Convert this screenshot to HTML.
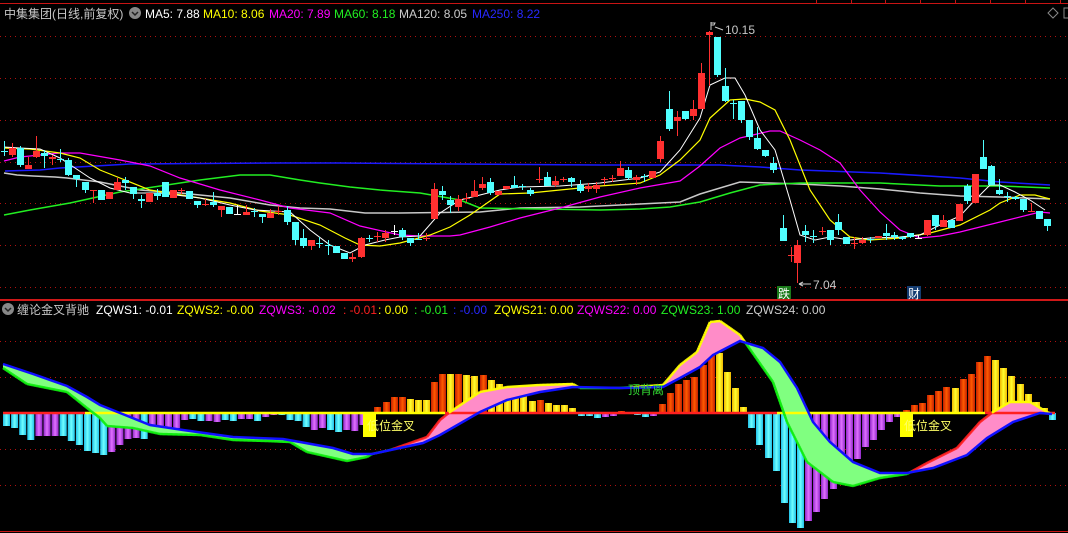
<!DOCTYPE html>
<html><head><meta charset="utf-8"><style>
html,body{margin:0;padding:0;background:#000;width:1068px;height:533px;overflow:hidden}
svg{display:block}
text{font-family:"Liberation Sans","Noto Sans CJK SC",sans-serif;font-size:12px}
</style></head><body>
<svg id="s" width="1068" height="533" viewBox="0 0 1068 533" xmlns="http://www.w3.org/2000/svg">
<defs>
<linearGradient id="gr" x1="0" x2="1"><stop offset="0" stop-color="#c42000"/><stop offset=".5" stop-color="#ff5a00"/><stop offset="1" stop-color="#c42000"/></linearGradient>
<linearGradient id="gy" x1="0" x2="1"><stop offset="0" stop-color="#f0b800"/><stop offset=".5" stop-color="#ffff30"/><stop offset="1" stop-color="#f0b800"/></linearGradient>
<linearGradient id="gc" x1="0" x2="1"><stop offset="0" stop-color="#20c0e8"/><stop offset=".5" stop-color="#70ffff"/><stop offset="1" stop-color="#20c0e8"/></linearGradient>
<linearGradient id="gp" x1="0" x2="1"><stop offset="0" stop-color="#9028c8"/><stop offset=".5" stop-color="#e070ff"/><stop offset="1" stop-color="#9028c8"/></linearGradient>
</defs>
<g id="grid" stroke="#b01010" stroke-width="1" stroke-dasharray="1,4"></g>
<line x1="0" y1="3.5" x2="1068" y2="3.5" stroke="#c81414"/>
<g stroke="#c81414"><line x1="816.5" y1="0" x2="816.5" y2="3"/><line x1="851.5" y1="0" x2="851.5" y2="3"/><line x1="885.5" y1="0" x2="885.5" y2="3"/><line x1="920.5" y1="0" x2="920.5" y2="3"/><line x1="955.5" y1="0" x2="955.5" y2="3"/><line x1="990.5" y1="0" x2="990.5" y2="3"/><line x1="1025.5" y1="0" x2="1025.5" y2="3"/><line x1="1060.5" y1="0" x2="1060.5" y2="3"/></g>
<line x1="0" y1="300" x2="1068" y2="300" stroke="#d01818" stroke-width="2"/>
<line x1="0" y1="531.5" x2="1068" y2="531.5" stroke="#c81414"/>
<g id="ma"></g>
<g id="cd"></g>
<g id="hist"></g>
<g id="fill"></g>
<g id="zl"></g>
<g id="ln"></g>
<text x="4" y="18" fill="#c8c8c8">中集集团(日线,前复权)</text>
<circle cx="135" cy="13" r="6" fill="#888"/><path d="M132 12l3 3 3-3" stroke="#222" stroke-width="1.5" fill="none"/>
<text x="145" y="18" fill="#fff">MA5: 7.88</text>
<text x="203" y="18" fill="#ffff00">MA10: 8.06</text>
<text x="269" y="18" fill="#ff00ff">MA20: 7.89</text>
<text x="334" y="18" fill="#22ee22">MA60: 8.18</text>
<text x="399" y="18" fill="#cccccc">MA120: 8.05</text>
<text x="472" y="18" fill="#2828ff">MA250: 8.22</text>
<path d="M1053 8l5 5-5 5-5-5z" stroke="#888" fill="none"/>
<rect x="1064" y="8" width="5" height="10" stroke="#888" fill="none"/>
<path d="M711 22v8M711 23h4l-1 2h-3" stroke="#ccc" fill="none"/><path d="M715 27l8 3" stroke="#ccc"/>
<text x="725" y="34" fill="#c8c8c8">10.15</text>
<path d="M799 284h12M799 284l4-2M799 284l4 2" stroke="#ccc" fill="none"/>
<text x="813" y="289" fill="#c8c8c8">7.04</text>
<rect x="777" y="286" width="14" height="13" fill="#1a7a1a"/><text x="778" y="298" fill="#fff" font-size="12">跌</text>
<rect x="907" y="286" width="14" height="13" fill="#143c70"/><text x="908" y="298" fill="#fff" font-size="12">财</text>
<circle cx="8" cy="309" r="6" fill="#888"/><path d="M5 308l3 3 3-3" stroke="#222" stroke-width="1.5" fill="none"/>
<text x="17" y="314" fill="#c8c8c8">缠论金叉背驰</text>
<text x="96" y="314" fill="#fff">ZQWS1: -0.01</text>
<text x="177" y="314" fill="#ffff00">ZQWS2: -0.00</text>
<text x="259" y="314" fill="#ff00ff">ZQWS3: -0.02</text>
<text x="343" y="314" fill="#ff2020">: -0.01</text>
<text x="378" y="314" fill="#ffff00">: 0.00</text>
<text x="414" y="314" fill="#22ee22">: -0.01</text>
<text x="453" y="314" fill="#2828ff">: -0.00</text>
<text x="494" y="314" fill="#ffff00">ZQWS21: 0.00</text>
<text x="577" y="314" fill="#ff00ff">ZQWS22: 0.00</text>
<text x="661" y="314" fill="#22ee22">ZQWS23: 1.00</text>
<text x="746" y="314" fill="#cccccc">ZQWS24: 0.00</text>
<g id="lbl"></g>
</svg>
<script>
var NS="http://www.w3.org/2000/svg";
function el(p,t,a){var e=document.createElementNS(NS,t);for(var k in a)e.setAttribute(k,a[k]);document.getElementById(p).appendChild(e);return e;}
[36,78,120,162,203,245,287,341,377,449,485].forEach(function(y){el("grid","line",{x1:0,x2:1068,y1:y+.5,y2:y+.5});});
function pl(p,pts,c,w){el(p,"polyline",{points:pts.map(function(q){return q.join(",")}).join(" "),fill:"none",stroke:c,"stroke-width":w||1});}
pl("ma",[[5,171],[40,170],[60,168],[130,164],[280,163],[340,163],[460,164],[600,165],[720,165],[760,167],[800,170],[880,173],[960,178],[1000,182],[1050,185]],"#1a1aff",1.5);
pl("ma",[[4,173],[17,175],[33,176],[55,177],[67,178],[100,182],[120,186],[140,190],[180,193],[230,198],[270,205],[300,208],[330,209],[365,213],[400,213],[480,212],[520,208],[580,207],[620,205],[680,202],[700,194],[740,182],[800,184],[840,186],[880,189],[920,193],[960,196],[1000,197],[1050,199]],"#c8c8c8",1.5);
pl("ma",[[4,215],[30,210],[70,203],[120,192],[200,180],[240,175],[270,175],[300,180],[320,183],[350,187],[380,190],[420,193],[460,200],[480,208],[540,209],[600,210],[640,209],[670,207],[700,202],[730,193],[760,185],[800,183],[840,183],[880,183],[940,186],[1000,186],[1050,188]],"#22ee22",1.5);
pl("ma",[[4,161],[20,157],[60,153],[80,153],[120,160],[150,166],[180,178],[220,190],[260,200],[290,208],[330,213],[360,226],[400,235],[420,236],[450,236],[460,235],[490,227],[520,218],[560,208],[600,197],[640,188],[680,181],[700,166],[720,148],[740,138],[770,131],[780,131],[800,140],[820,150],[840,163],[860,190],[880,212],[900,230],[920,238],[940,236],[960,232],[1000,222],[1040,212],[1050,213]],"#ff00ff",1.2);
pl("ma",[[4,148],[30,149],[60,153],[80,158],[100,170],[120,178],[150,190],[200,198],[230,203],[260,211],[290,215],[320,225],[345,238],[360,245],[380,246],[400,243],[430,235],[450,227],[470,215],[500,194],[530,193],[560,190],[600,186],[640,183],[660,175],[680,160],[700,140],[710,118],[730,100],[745,99],[760,102],[775,110],[790,140],[810,190],[830,220],[850,237],[870,240],[900,238],[930,233],[960,225],[990,210],[1000,203],[1020,195],[1035,195],[1050,199]],"#ffff00",1.2);
pl("ma",[[4,147],[20,148],[40,149],[60,158],[90,178],[110,188],[130,193],[160,193],[200,198],[230,205],[255,210],[290,212],[310,230],[330,245],[350,253],[365,245],[385,240],[400,237],[420,236],[440,213],[460,200],[480,195],[500,190],[520,187],[560,186],[600,183],[640,178],[660,172],[680,150],[700,118],[710,85],[725,78],[735,78],[745,95],[760,130],[775,150],[790,200],[800,235],[815,240],[830,237],[850,240],[870,238],[900,237],[920,235],[940,225],[960,216],[975,200],[990,185],[1000,185],[1015,192],[1030,200],[1045,210]],"#ffffff",1);
var C=[[4,151,151,141,156,"c"],[12,155,148,143,157],[20,148,165,146,167],[28,169,165,157,169],[36,157,151,136,158],[44,153,156,150,168],[52,159,157,155,165],[60,159,159,149,162,"c"],[68,160,175,158,176],[76,175,179,175,187],[85,182,190,182,193],[93,190,190,190,203,"r"],[101,190,200,190,200],[109,199,192,192,199],[117,190,182,178,190],[125,180,183,177,190],[133,187,194,187,199],[141,199,201,195,208],[149,202,193,193,202],[157,193,196,189,200],[165,182,197,182,197],[173,198,190,190,198],[181,190,190,188,194,"r"],[189,191,199,191,199],[197,201,205,201,208],[205,204,204,199,206,"r"],[213,202,205,192,207],[221,210,206,206,217],[229,207,214,207,214],[237,214,214,205,215,"w"],[246,215,212,205,215],[254,211,211,208,217,"c"],[262,214,217,214,223],[270,218,213,209,218],[278,211,211,206,215,"r"],[287,210,222,206,225],[295,222,240,222,245],[303,238,246,229,248],[311,246,240,240,250],[319,243,243,237,248,"c"],[328,245,245,240,255,"c"],[336,246,253,246,253],[344,253,259,253,259],[352,259,257,253,262],[361,257,238,237,258],[369,238,238,235,242,"c"],[377,236,236,232,242,"r"],[385,238,233,230,242],[394,231,231,225,235,"w"],[402,230,237,228,240],[410,238,243,238,246],[418,239,239,233,240,"c"],[426,238,238,233,241,"r"],[434,219,189,183,219],[442,191,195,186,200],[450,200,205,196,213],[458,207,199,195,211],[466,198,198,193,202,"r"],[474,197,191,180,197],[482,188,184,177,190],[490,182,193,178,195],[498,195,191,191,195],[506,189,186,186,189],[514,185,188,176,188],[522,186,186,184,190,"c"],[530,190,194,188,196],[539,179,179,167,183,"r"],[547,177,186,172,186],[555,185,181,176,187],[563,179,179,177,182,"r"],[571,178,182,177,187],[580,185,191,180,193],[588,189,186,183,192],[596,189,185,182,193],[604,179,179,177,185,"r"],[612,178,178,175,182,"r"],[620,176,168,161,176],[628,170,178,167,180],[636,180,177,175,185],[644,176,176,174,182,"c"],[652,178,171,171,178],[660,159,141,136,162],[669,109,129,91,131],[677,121,117,111,136],[685,111,119,111,120],[693,116,109,100,120],[701,109,73,63,109],[709,35,32,31,86],[717,37,75,37,77],[725,86,101,68,102],[733,103,103,100,119,"c"],[741,101,120,101,123],[749,120,137,120,140],[757,138,149,127,150],[765,150,156,150,157],[773,163,170,157,173],[783,228,241,215,241],[791,255,255,247,262,"r"],[797,263,245,240,283],[805,231,235,225,242],[813,236,236,230,243,"c"],[822,231,231,227,235,"r"],[830,230,240,230,245],[838,222,230,214,235],[846,237,244,237,244],[854,243,243,237,249,"r"],[862,243,240,237,244],[870,239,239,237,243,"c"],[878,238,236,236,238],[886,233,236,224,240],[894,235,237,232,240],[902,237,239,236,240],[910,233,237,233,238],[918,238,238,235,239,"w"],[927,235,220,220,236],[935,215,226,215,230],[943,227,220,215,227],[951,220,228,220,228],[959,221,204,204,221],[967,186,201,184,204],[975,203,174,174,203],[983,157,169,140,169],[991,166,185,165,185],[999,190,194,179,195],[1007,196,196,192,202,"c"],[1015,197,199,196,200],[1023,199,210,199,212],[1031,211,211,203,211,"r"],[1039,211,219,211,219],[1047,219,226,219,231]];
var col={r:"#ff3030",c:"#50ffff",w:"#ffffff"};
C.forEach(function(k){var x=k[0],o=k[1],c=k[2],h=k[3],l=k[4];
 var cl=k[5]?col[k[5]]:(c<o?col.r:col.c);
 el("cd","line",{x1:x+.5,x2:x+.5,y1:h,y2:l,stroke:cl});
 var t=Math.min(o,c),b=Math.max(o,c);
 if(b-t<1.5){el("cd","line",{x1:x-3,x2:x+4,y1:t+.5,y2:t+.5,stroke:cl});}
 else el("cd","rect",{x:x-3,y:t,width:7,height:b-t,fill:cl});
});
var L=[[426,"c"],[428,"c"],[435,"c"],[440,"c"],[436,"p"],[436,"p"],[436,"p"],[436,"c"],[441,"c"],[445,"c"],[451,"c"],[453,"c"],[455,"c"],[452,"p"],[445,"p"],[439,"p"],[438,"p"],[439,"c"],[432,"p"],[432,"p"],[432,"p"],[428,"p"],[420,"p"],[419,"c"],[421,"c"],[421,"p"],[422,"p"],[420,"c"],[421,"c"],[419,"p"],[419,"p"],[421,"c"],[417,"p"],[415,"p"],[415,"c"],[420,"c"],[421,"c"],[427,"c"],[430,"p"],[428,"p"],[430,"c"],[432,"c"],[430,"p"],[431,"p"],[425,"p"]];
var H=L.map(function(v,i){return [3+8.1*i,v[0],v[1]];});
H=H.concat([[374,407,"r"],[383,402,"r"],[391,397,"r"],[399,397,"r"],[407,399,"y"],[415,400,"y"],[423,400,"y"],[431,382,"r"],[439,374,"r"],[447,374,"y"],[455,374,"r"],[463,375,"y"],[471,376,"y"],[480,375,"r"],[488,380,"y"],[496,384,"y"],[504,387,"y"],[512,391,"y"],[520,393,"y"],[529,401,"y"],[537,400,"r"],[545,403,"y"],[553,405,"y"],[561,405,"y"],[569,408,"y"],[578,416,"c"],[586,416,"c"],[594,418,"c"],[602,417,"p"],[610,416,"p"],[618,411,"r"],[634,415,"c"],[642,417,"c"],[650,416,"p"],[659,404,"r"],[667,393,"r"],[675,384,"r"],[683,380,"r"],[691,377,"r"],[700,365,"r"],[708,345,"r"],[716,353,"y"],[724,372,"y"],[732,388,"y"],[740,407,"y"],[748,428,"c"],[756,445,"c"],[765,458,"c"],[773,471,"c"],[781,503,"c"],[789,523,"c"],[797,528,"c"],[805,521,"p"],[813,512,"p"],[821,499,"p"],[830,489,"p"],[838,475,"p"],[846,467,"p"],[854,459,"p"],[862,447,"p"],[870,440,"p"],[878,430,"p"],[886,422,"p"],[894,417,"p"],[903,410,"r"],[911,405,"r"],[919,403,"r"],[927,395,"r"],[935,391,"r"],[943,387,"r"],[952,388,"y"],[960,379,"r"],[968,374,"r"],[976,362,"r"],[984,356,"r"],[992,360,"y"],[1000,368,"y"],[1008,376,"y"],[1017,384,"y"],[1025,394,"y"],[1033,402,"y"],[1041,408,"y"],[1049,420,"c"]]);
H.forEach(function(b){var y0=413,t=Math.min(y0,b[1]),h=Math.abs(b[1]-y0);el("hist","rect",{x:b[0],y:t,width:7,height:h,fill:"url(#g"+b[2]+")"});});
var B=[[3,364],[33,374],[67,386],[87,397],[100,405],[120,413],[150,425],[183,430],[233,437],[283,439],[300,442],[333,448],[353,454],[372,454],[423,443],[440,435],[480,412],[507,400],[540,392],[573,387],[623,388],[663,387],[680,378],[700,367],[713,355],[740,341],[763,348],[780,362],[797,388],[813,422],[830,442],[853,462],[880,473],[907,473],[933,468],[967,455],[987,438],[1013,422],[1040,413],[1052,414]];
var F=[[3,368],[27,384],[67,392],[87,408],[100,418],[107,426],[133,428],[160,434],[200,435],[233,440],[267,441],[290,442],[307,452],[347,461],[367,457],[372,454],[390,450],[427,437],[440,420],[450,412],[480,392],[507,387],[540,385],[573,384],[580,388],[620,388],[663,385],[680,365],[697,352],[710,322],[720,321],[740,335],[747,345],[773,382],[787,422],[807,462],[833,482],[853,486],[880,478],[907,474],[927,463],[957,448],[980,422],[993,412],[1010,402],[1030,402],[1047,412],[1052,414]];
function ip(A,x){for(var i=1;i<A.length;i++){if(x<=A[i][0]){var a=A[i-1],b=A[i];return a[1]+(b[1]-a[1])*(x-a[0])/(b[0]-a[0]);}}return A[A.length-1][1];}
for(var x=3;x<=1052;x++){var yb=ip(B,x),yf=ip(F,x);if(Math.abs(yb-yf)<.5)continue;
 el("fill","line",{x1:x+.5,x2:x+.5,y1:yf,y2:yb,stroke:yf<yb?"#ff8cc8":"#80ff80"});}
[[3,85,"#ff2020"],[85,445,"#ffff00"],[445,777,"#ff2020"],[777,985,"#ffff00"],[985,1055,"#ff2020"]].forEach(function(s){el("zl","line",{x1:s[0],x2:s[1],y1:413,y2:413,stroke:s[2],"stroke-width":2.5});});
for(var x=3;x<1052;x++){var a=ip(F,x),b=ip(F,x+1),bb=ip(B,x);var c=a<bb-0.5?(a<413?"#ffff00":"#ff2020"):"#10ee10";el("ln","line",{x1:x,x2:x+1,y1:a,y2:b,stroke:c,"stroke-width":2.5});}
pl("ln",B,"#1010ff",2.5);
el("lbl","rect",{x:363,y:413,width:13,height:24,fill:"#ffff00"});
el("lbl","rect",{x:900,y:413,width:13,height:24,fill:"#ffff00"});
var t1=el("lbl","text",{x:367,y:430,fill:"#ffff66","font-size":"13"});t1.textContent="低位金叉";
var t2=el("lbl","text",{x:904,y:430,fill:"#ffff66","font-size":"13"});t2.textContent="低位金叉";
var t3=el("lbl","text",{x:628,y:394,fill:"#33dd33","font-size":"13"});t3.textContent="顶背离";
</script>
</body></html>
